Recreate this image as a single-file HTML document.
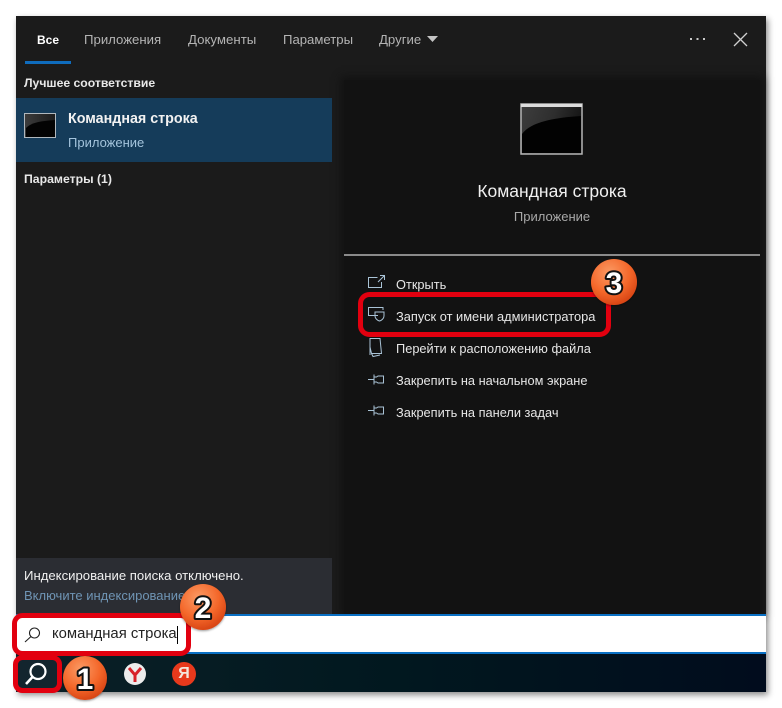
<!DOCTYPE html>
<html><head><meta charset="utf-8">
<style>
html,body{margin:0;padding:0;width:782px;height:708px;overflow:hidden;background:#fff}
body{position:relative;font-family:"Liberation Sans",sans-serif;filter:blur(.3px)}
div{position:absolute}
.t{white-space:nowrap;line-height:18px;height:18px}
svg{position:absolute;overflow:visible}
</style></head>
<body>
<div style="left:16px;top:16px;width:750px;height:676px;background:#1b1b1b;box-shadow:2px 3px 6px rgba(0,0,0,.45)"></div>
<div style="left:344px;top:80px;width:416px;height:534px;background:#121212;box-shadow:0 0 8px 3px #121212"></div>
<div style="left:16px;top:558px;width:316px;height:56px;background:#2b2d33"></div>
<div style="left:16px;top:98px;width:316px;height:64px;background:#153c5a"></div>
<div style="left:25px;top:61px;width:46px;height:3px;background:#0f6cbd"></div>

<div class="t" style="left:37px;top:31px;font-size:12px;font-weight:bold;color:#fff">Все</div>
<div class="t" style="left:84px;top:31px;font-size:13.2px;color:#b4b4b4">Приложения</div>
<div class="t" style="left:188px;top:31px;font-size:13.250px;color:#b4b4b4">Документы</div>
<div class="t" style="left:283px;top:31px;font-size:13.150px;color:#b4b4b4">Параметры</div>
<div class="t" style="left:379px;top:31px;font-size:13.2px;color:#b4b4b4">Другие</div>
<svg style="left:427px;top:36px" width="12" height="7"><path d="M0 0H11L5.500 6Z" fill="#c4c4c4"/></svg>
<svg style="left:690px;top:37px" width="18" height="4"><g fill="#c8c8c8"><rect x="0" y="1" width="2" height="2"/><rect x="6.500" y="1" width="2" height="2"/><rect x="13" y="1" width="2" height="2"/></g></svg>
<svg style="left:733px;top:32px" width="15" height="15"><path d="M1 1L14 14M14 1L1 14" stroke="#d0d0d0" stroke-width="1.300" fill="none"/></svg>

<div class="t" style="left:24px;top:74px;font-size:12.200px;font-weight:bold;color:#e8e8e8">Лучшее соответствие</div>
<svg style="left:24px;top:113px" width="32" height="25">
<defs><linearGradient id="g" x1="0" y1="0" x2="1" y2="0"><stop offset="0" stop-color="#3c3c3c"/><stop offset="1" stop-color="#1c1c1c"/></linearGradient></defs>
<rect x=".5" y=".5" width="31" height="24" fill="url(#g)" stroke="#b0b8be"/><path d="M2 15C8 9 18 8 31 7V24H2Z" fill="#030303"/></svg>
<div class="t" style="left:68px;top:110px;font-size:14.300px;font-weight:bold;color:#f2f2f2">Командная строка</div>
<div class="t" style="left:68px;top:134px;font-size:13px;color:#a4c4dc">Приложение</div>
<div class="t" style="left:24px;top:170px;font-size:12.250px;font-weight:bold;color:#e8e8e8">Параметры (1)</div>

<svg style="left:520px;top:103px" width="63" height="52">
<defs><linearGradient id="h" x1="0" y1="0" x2="1" y2=".3"><stop offset="0" stop-color="#3e3e3e"/><stop offset=".55" stop-color="#2e2e2e"/><stop offset="1" stop-color="#141414"/></linearGradient></defs>
<rect x="1" y="1" width="61" height="50" fill="url(#h)" stroke="#b4b4b4" stroke-width="1.500"/><rect x="1" y="1" width="61" height="3" fill="#dcdcdc"/><path d="M2 31C10 20 30 15 61 13V50H2Z" fill="#020202"/></svg>
<div class="t" style="left:344px;top:180px;width:416px;text-align:center;height:22px;line-height:22px;font-size:17.500px;color:#f0f0f0">Командная строка</div>
<div class="t" style="left:344px;top:208px;width:416px;text-align:center;font-size:13px;color:#a8a8a8">Приложение</div>
<div style="left:344px;top:254px;width:416px;height:2px;background:#8a8a8a"></div>

<div class="t" style="left:396px;top:276px;font-size:12.800px;color:#e6e6e6">Открыть</div>
<div class="t" style="left:396px;top:308px;font-size:12.850px;color:#e6e6e6">Запуск от имени администратора</div>
<div class="t" style="left:396px;top:340px;font-size:12.800px;color:#e6e6e6">Перейти к расположению файла</div>
<div class="t" style="left:396px;top:372px;font-size:12.800px;color:#e6e6e6">Закрепить на начальном экране</div>
<div class="t" style="left:396px;top:404px;font-size:12.800px;color:#e6e6e6">Закрепить на панели задач</div>

<svg style="left:368px;top:275px" width="18" height="14" fill="none" stroke="#a9c3d6" stroke-width="1"><path d="M9.500 2.500H.5V12.500H13.500V7"/><path d="M10 7L16 1M12 .5H16.500V5"/></svg>
<svg style="left:368px;top:307px" width="18" height="15" fill="none" stroke="#a9c3d6" stroke-width="1"><path d="M10 8.500H.5V.5H15V3"/><path d="M7 5H16V9C16 11.500 13.500 13.500 11.500 14C9.500 13.500 7 11.500 7 9Z"/></svg>
<svg style="left:369px;top:337px" width="14" height="21" fill="none" stroke="#a9c3d6" stroke-width="1"><path d="M1 1.500H11L12.500 16.500H2.500L1 10Z"/><path d="M2.500 16.500L4 19.500L11 18"/><path d="M1 1.500L1 18"/></svg>
<svg style="left:368px;top:374px" width="17" height="12" fill="none" stroke="#a9c3d6" stroke-width="1"><path d="M0 5.500H6M6 3H8.500L10 2H15.500V9H10L8.500 8H6Z"/><path d="M6 .5V10.500"/></svg>
<svg style="left:368px;top:405px" width="17" height="12" fill="none" stroke="#a9c3d6" stroke-width="1"><path d="M0 5.500H6M6 3H8.500L10 2H15.500V9H10L8.500 8H6Z"/><path d="M6 .5V10.500"/></svg>

<div class="t" style="left:24px;top:567px;font-size:13.150px;color:#f0f0f0">Индексирование поиска отключено.</div>
<div class="t" style="left:24px;top:587px;font-size:13px;color:#6f94b4">Включите индексирование</div>

<div style="left:16px;top:614px;width:750px;height:40px;background:#fff;box-sizing:border-box;border-top:2px solid #0a70c4;border-bottom:2px solid #0a70c4"></div>
<div class="t" style="left:52px;top:625px;font-size:14.850px;color:#222">командная строка</div>
<div style="left:177px;top:626px;width:1px;height:18px;background:#000"></div>
<svg style="left:24px;top:626px" width="18" height="17" fill="none" stroke="#222" stroke-width="1.100"><circle cx="10.500" cy="7" r="5"/><path d="M7 10.500L1 16"/></svg>

<div style="left:16px;top:654px;width:750px;height:38px;background:linear-gradient(90deg,#0b2027,#01181f 50%,#010c1d)"></div>
<div style="left:16px;top:656px;width:44px;height:36px;background:#13252e"></div>
<svg style="left:24px;top:661px" width="26" height="26" fill="none" stroke="#fff" stroke-width="2.200"><circle cx="14" cy="10.500" r="7.500"/><path d="M8.500 16L2 23" stroke-width="2.600"/></svg>
<svg style="left:123px;top:662px" width="24" height="24"><circle cx="12" cy="12" r="11" fill="#ececec"/><path d="M6 6L12 13L18 6M12 13V20" fill="none" stroke="#d8222a" stroke-width="3"/></svg>
<div style="left:172px;top:662px;width:24px;height:24px;border-radius:50%;background:#e8391c;color:#f4e6dc;font-size:16px;font-weight:bold;line-height:24px;text-align:center">Я</div>

<svg style="left:0;top:0" width="782" height="708" fill="none" stroke="#e2000f" stroke-width="5">
<rect x="360.500" y="294.500" width="248" height="40" rx="9"/>
<rect x="14.500" y="615.500" width="174" height="38" rx="8"/>
<rect x="15.500" y="657.500" width="44" height="33" rx="7"/>
</svg>

<svg style="left:0;top:0" width="782" height="708">
<defs><radialGradient id="b" cx=".4" cy=".3" r=".8"><stop offset="0" stop-color="#fb9a64"/><stop offset=".55" stop-color="#f4672a"/><stop offset="1" stop-color="#cf3a0e"/></radialGradient>
<filter id="s" x="-20%" y="-20%" width="140%" height="140%"><feDropShadow dx="0" dy="1" stdDeviation="1" flood-color="#000" flood-opacity=".4"/></filter></defs>
<g filter="url(#s)"><circle cx="85" cy="678" r="22" fill="url(#b)"/><circle cx="203" cy="607" r="23" fill="url(#b)"/><circle cx="614" cy="282" r="23" fill="url(#b)"/></g>
<g font-family="'Liberation Sans',sans-serif" font-weight="bold" font-size="30" text-anchor="middle" fill="#fff" stroke="#111" stroke-width="4" paint-order="stroke" stroke-linejoin="round">
<text x="85" y="689">1</text><text x="203" y="618">2</text><text x="614" y="293">3</text></g>
</svg>
</body></html>
